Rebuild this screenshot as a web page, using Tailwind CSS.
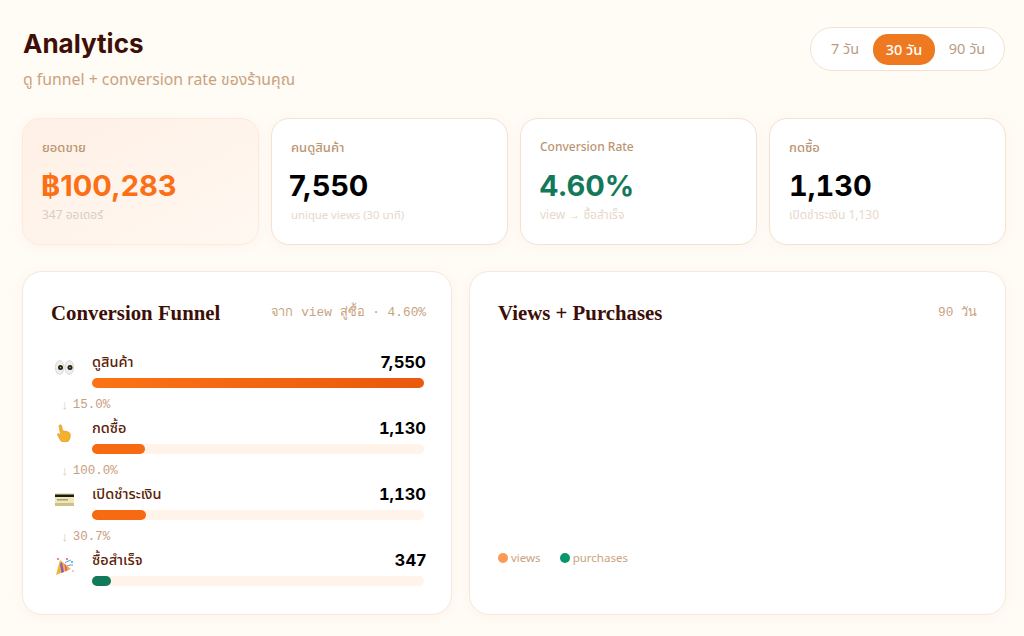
<!DOCTYPE html>
<html lang="th"><head><meta charset="utf-8">
<script src="https://cdn.jsdelivr.net/npm/@tailwindcss/browser@4"></script>
</head>
<body class="bg-[#fffbf5] m-0 font-['Noto_Sans','Noto_Sans_Thai',sans-serif]">
<div class="w-[1024px] h-[636px] overflow-hidden pl-[22px] pr-[18px] pt-[27px] flex flex-col">
  <header class="flex justify-between items-start h-[91px]">
    <div>
      <h1 class="ml-px font-['Inter',sans-serif] font-bold text-[26px] leading-[34px] text-[#3d0f06]">Analytics</h1>
      <p class="ml-px mt-[7px] text-[15.8px] leading-[22px] text-[#c9a27e]">ดู funnel + conversion rate ของร้านคุณ</p>
    </div>
    <div class="mr-px flex items-center h-[44px] w-[195px] border border-[#f3e2d2] rounded-[22px] bg-white pl-[6px] text-[14.5px]">
      <span class="w-[56px] text-center text-[#b89c84]">7 วัน</span>
      <span class="w-[62px] h-[31px] leading-[31px] text-center rounded-[15px] bg-[#ef7920] text-white font-medium">30 วัน</span>
      <span class="w-[64px] text-center text-[#b89c84]">90 วัน</span>
    </div>
  </header>
  <section class="grid grid-cols-4 gap-[12px] h-[127px]">
    <div class="rounded-[18px] border border-[#fbeadd] bg-gradient-to-br from-[#fff0e6] to-[#fff8f1] pl-[19px] pt-[19px] shadow-[0_2px_12px_rgba(190,120,60,0.05)]">
      <div class="text-[13px] leading-[18px] font-medium text-[#bb9572]">ยอดขาย</div>
      <div class="mt-[12px] -ml-px font-['Inter',sans-serif] font-bold text-[29px] leading-[36px] text-[#fb6f15]">฿100,283</div>
      <div class="mt-[3px] text-[12px] leading-[16px] text-[#d9cdc4]">347 ออเดอร์</div>
    </div>
    <div class="rounded-[18px] border border-[#f3e2d2] bg-white pl-[19px] pt-[19px] shadow-[0_2px_12px_rgba(190,120,60,0.05)]">
      <div class="text-[13px] leading-[18px] font-medium text-[#bb9572]">คนดูสินค้า</div>
      <div class="mt-[12px] -ml-[2px] font-['Inter',sans-serif] font-bold text-[29px] leading-[36px] text-black">7,550</div>
      <div class="mt-[3px] text-[11.3px] leading-[16px] text-[#e6d8ca]">unique views (30 นาที)</div>
    </div>
    <div class="rounded-[18px] border border-[#f3e2d2] bg-white pl-[19px] pt-[19px] shadow-[0_2px_12px_rgba(190,120,60,0.05)]">
      <div class="text-[12px] leading-[18px] font-medium text-[#bb9572]">Conversion Rate</div>
      <div class="mt-[12px] -ml-[1px] font-['Inter',sans-serif] font-bold text-[29px] leading-[36px] text-[#13795b]">4.60%</div>
      <div class="mt-[3px] text-[12px] leading-[16px] text-[#e6d8ca]">view → ซื้อสำเร็จ</div>
    </div>
    <div class="rounded-[18px] border border-[#f3e2d2] bg-white pl-[19px] pt-[19px] shadow-[0_2px_12px_rgba(190,120,60,0.05)]">
      <div class="text-[13px] leading-[18px] font-medium text-[#bb9572]">กดซื้อ</div>
      <div class="mt-[12px] font-['Inter',sans-serif] font-bold text-[29px] leading-[36px] text-black [font-feature-settings:'tnum']">1,130</div>
      <div class="mt-[3px] text-[12px] leading-[16px] text-[#e6d8ca]">เปิดชำระเงิน 1,130</div>
    </div>
  </section>
  <section class="mt-[26px] flex gap-[17px] h-[344px]">
    <div class="w-[430px] rounded-[20px] border border-[#f5e8dc] bg-white pl-[28px] pr-[25px] pt-[28px] shadow-[0_2px_12px_rgba(190,120,60,0.05)]">
      <div class="flex justify-between items-center h-[26px]">
        <h2 class="font-['Liberation_Serif',serif] font-bold text-[20.8px] text-[#3d0f06]">Conversion Funnel</h2>
        <span class="font-['Liberation_Mono','Noto_Sans',monospace] text-[12.8px] text-[#c9a27e]">จาก view สู่ซื้อ · 4.60%</span>
      </div>
      <div class="mt-[24px]">
        <div class="flex h-[47px]">
          <div class="w-[41px] pt-[10px] pl-[4px]">
            <svg class="block" width="19" height="15" viewBox="0 0 19 15"><ellipse cx="4.700" cy="7.500" rx="4.300" ry="7" fill="#eeeef0" stroke="#c6c6c8" stroke-width=".6"/><ellipse cx="14.300" cy="7.500" rx="4.300" ry="7" fill="#eeeef0" stroke="#c6c6c8" stroke-width=".6"/><circle cx="5.500" cy="7.500" r="2.500" fill="#2a2118"/><circle cx="15" cy="7.500" r="2.500" fill="#2a2118"/><circle cx="5.500" cy="7.500" r=".8" fill="#c9a23a"/><circle cx="15" cy="7.500" r=".8" fill="#c9a23a"/></svg>
          </div>
          <div class="flex-1">
            <div class="flex justify-between h-[24px] items-center"><span class="text-[14.5px] font-medium text-[#5c2208]">ดูสินค้า</span><span class="font-['Inter',sans-serif] font-bold text-[16.5px] text-black">7,550</span></div>
            <div class="mt-[4px] h-[10px] w-[332px] rounded-full bg-gradient-to-r from-[#fb7316] to-[#ea580c]"></div>
          </div>
        </div>
        <div class="flex items-center h-[19px] pb-[2px] pl-[10px] gap-[4px] font-['Liberation_Mono',monospace] text-[12.5px] text-[#c99d7f]"><span class="text-[#dcc9b6] text-[13px]">↓</span><span>15.0%</span></div>
        <div class="flex h-[47px]">
          <div class="w-[41px] pt-[8px] pl-[6px]">
            <svg class="block" width="14" height="18" viewBox="0 0 14 18"><path d="M2.600 1c.9-.7 1.800 0 2 1l1.200 4.800 4.300.8c1.800.4 3.300 1.500 3.300 3.300l-.4 3c-.3 2.300-2 4.100-4.300 4.100H6.500c-1.400 0-2.600-.7-3.300-2L.6 11c-.6-1.100.5-1.900 1.400-1.200l1.800 1.700L2 2.800C1.900 2 2.100 1.400 2.600 1z" fill="#f4b12e" stroke="#d98a1e" stroke-width=".5"/></svg>
          </div>
          <div class="flex-1">
            <div class="flex justify-between h-[24px] items-center"><span class="text-[14.5px] font-medium text-[#5c2208]">กดซื้อ</span><span class="font-['Inter',sans-serif] font-bold text-[16.5px] text-black [font-feature-settings:'tnum']">1,130</span></div>
            <div class="mt-[4px] h-[10px] w-[332px] rounded-full bg-[#fff3ea]"><div class="h-full w-[53px] rounded-full bg-[#f66a11]"></div></div>
          </div>
        </div>
        <div class="flex items-center h-[19px] pb-[2px] pl-[10px] gap-[4px] font-['Liberation_Mono',monospace] text-[12.5px] text-[#c99d7f]"><span class="text-[#dcc9b6] text-[13px]">↓</span><span>100.0%</span></div>
        <div class="flex h-[47px]">
          <div class="w-[41px] pt-[11px] pl-[4px]">
            <svg class="block" width="19" height="13" viewBox="0 0 19 13"><rect width="19" height="13" rx="1" fill="#eee6bd"/><rect y="1.500" width="19" height="2.500" fill="#1d1a12"/><rect x="2" y="6" width="11" height="1.500" fill="#a89f72"/><rect y="10" width="19" height="3" fill="#cfc184"/></svg>
          </div>
          <div class="flex-1">
            <div class="flex justify-between h-[24px] items-center"><span class="text-[14.5px] font-medium text-[#5c2208]">เปิดชำระเงิน</span><span class="font-['Inter',sans-serif] font-bold text-[16.5px] text-black [font-feature-settings:'tnum']">1,130</span></div>
            <div class="mt-[4px] h-[10px] w-[332px] rounded-full bg-[#fff3ea]"><div class="h-full w-[54px] rounded-full bg-[#f66a11]"></div></div>
          </div>
        </div>
        <div class="flex items-center h-[19px] pb-[2px] pl-[10px] gap-[4px] font-['Liberation_Mono',monospace] text-[12.5px] text-[#c99d7f]"><span class="text-[#dcc9b6] text-[13px]">↓</span><span>30.7%</span></div>
        <div class="flex h-[47px]">
          <div class="w-[41px] pt-[8px] pl-[4px]">
            <svg class="block" width="20" height="20" viewBox="0 0 20 20"><path d="M5 4l11 9-15 6z" fill="#f2b632"/><path d="M7 6l2 10-2.500 1L5 8z" fill="#8e5bc4"/><path d="M11 9l1.500 5.500-2 1L9.500 8z" fill="#e8558f"/><circle cx="12" cy="3" r="1" fill="#e8558f"/><circle cx="17" cy="6" r="1" fill="#4a9be0"/><circle cx="3" cy="3" r="1" fill="#e8558f"/><path d="M10 7c2-2 4-2 6-3M12 10c2-1 4-1 6-1" stroke="#4a9be0" stroke-width="1" fill="none"/><circle cx="18" cy="15" r="1" fill="#e8b0c8"/></svg>
          </div>
          <div class="flex-1">
            <div class="flex justify-between h-[24px] items-center"><span class="text-[14.5px] font-medium text-[#5c2208]">ซื้อสำเร็จ</span><span class="font-['Inter',sans-serif] font-bold text-[16.5px] text-black">347</span></div>
            <div class="mt-[4px] h-[10px] w-[332px] rounded-full bg-[#fff3ea]"><div class="h-full w-[19px] rounded-full bg-[#13795b]"></div></div>
          </div>
        </div>
      </div>
    </div>
    <div class="flex-1 rounded-[20px] border border-[#f5e8dc] bg-white pl-[28px] pr-[28px] pt-[28px] shadow-[0_2px_12px_rgba(190,120,60,0.05)]">
      <div class="flex justify-between items-center h-[26px]">
        <h2 class="font-['Liberation_Serif',serif] font-bold text-[20.8px] text-[#3d0f06]">Views + Purchases</h2>
        <span class="font-['Liberation_Mono','Noto_Sans',monospace] text-[12.8px] text-[#c9a27e]">90 วัน</span>
      </div>
      <div class="mt-[223px] flex items-center gap-[19px] text-[11.5px] text-[#c9a27e]">
        <span class="flex items-center gap-[3px]"><i class="w-[10px] h-[10px] rounded-full bg-[#fb9a50]"></i>views</span>
        <span class="flex items-center gap-[3px]"><i class="w-[10px] h-[10px] rounded-full bg-[#059669]"></i>purchases</span>
      </div>
    </div>
  </section>
</div>
</body></html>
